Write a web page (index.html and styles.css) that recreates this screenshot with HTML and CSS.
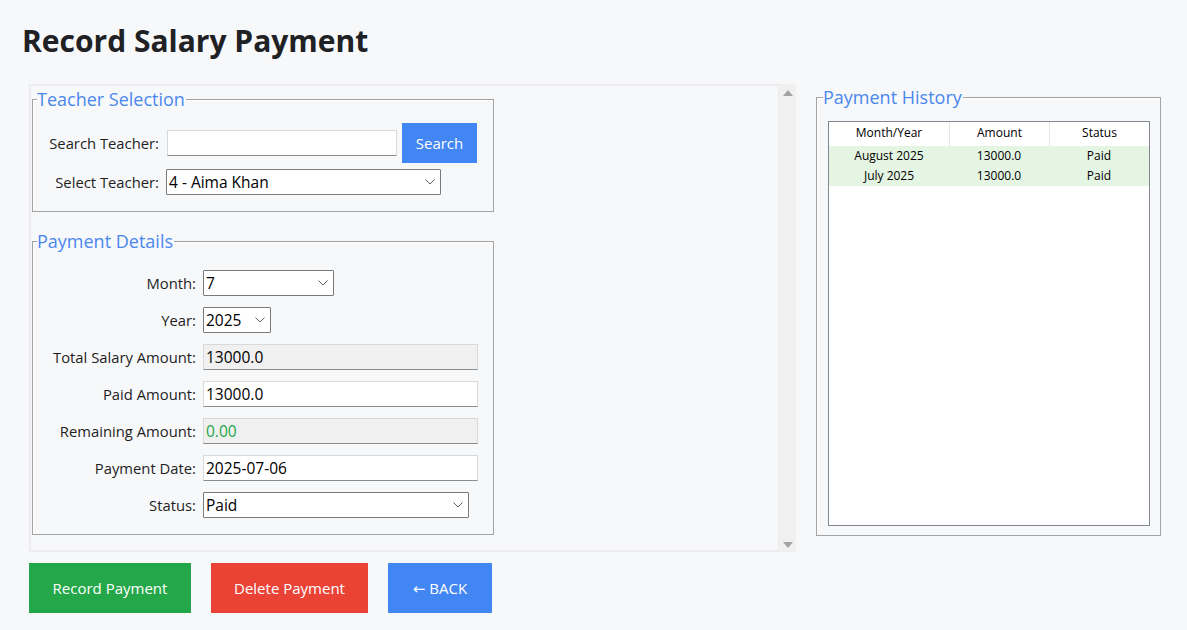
FILE: index.html
```html
<!DOCTYPE html>
<html>
<head>
<meta charset="utf-8">
<link rel="stylesheet" href="styles.css">
</head>
<body>
<h1 class="title">Record Salary Payment</h1>
<div class="main">
  <div class="scroller">
    <div class="canvas">
      <fieldset class="group teacher">
        <legend>Teacher Selection</legend>
        <div class="teacher-grid">
          <span class="lbl">Search Teacher:</span>
          <input class="entry search-entry" type="text" value="">
          <button class="btn-search">Search</button>
          <span class="lbl">Select Teacher:</span>
          <div class="combo combo-teacher"><span>4 - Aima Khan</span><svg class="chev" width="10" height="6" viewBox="0 0 10 6"><path d="M0.5 0.5 L5 5 L9.5 0.5" fill="none" stroke="#606060" stroke-width="1"/></svg></div>
        </div>
      </fieldset>
      <fieldset class="group payment">
        <legend>Payment Details</legend>
        <div class="pay-grid">
          <span class="lbl">Month:</span>
          <div class="combo combo-month"><span>7</span><svg class="chev" width="10" height="6" viewBox="0 0 10 6"><path d="M0.5 0.5 L5 5 L9.5 0.5" fill="none" stroke="#606060" stroke-width="1"/></svg></div>
          <span class="lbl">Year:</span>
          <div class="combo combo-year"><span>2025</span><svg class="chev" width="10" height="6" viewBox="0 0 10 6"><path d="M0.5 0.5 L5 5 L9.5 0.5" fill="none" stroke="#606060" stroke-width="1"/></svg></div>
          <span class="lbl">Total Salary Amount:</span>
          <input class="entry readonly" type="text" value="13000.0" readonly>
          <span class="lbl">Paid Amount:</span>
          <input class="entry" type="text" value="13000.0">
          <span class="lbl">Remaining Amount:</span>
          <input class="entry readonly green" type="text" value="0.00" readonly>
          <span class="lbl">Payment Date:</span>
          <input class="entry" type="text" value="2025-07-06">
          <span class="lbl">Status:</span>
          <div class="combo combo-status"><span>Paid</span><svg class="chev" width="10" height="6" viewBox="0 0 10 6"><path d="M0.5 0.5 L5 5 L9.5 0.5" fill="none" stroke="#606060" stroke-width="1"/></svg></div>
        </div>
      </fieldset>
    </div>
    <div class="scrollbar">
      <svg width="10" height="6" viewBox="0 0 10 6"><path d="M0 6 L5 0 L10 6 Z" fill="#a3a3a3"/></svg>
      <svg width="10" height="6" viewBox="0 0 10 6"><path d="M0 0 L5 6 L10 0 Z" fill="#a3a3a3"/></svg>
    </div>
  </div>
  <fieldset class="group history">
    <legend>Payment History</legend>
    <div class="tree">
      <div class="tree-row tree-head">
        <span>Month/Year</span><span>Amount</span><span>Status</span>
      </div>
      <div class="tree-row tree-item">
        <span>August 2025</span><span>13000.0</span><span>Paid</span>
      </div>
      <div class="tree-row tree-item">
        <span>July 2025</span><span>13000.0</span><span>Paid</span>
      </div>
    </div>
  </fieldset>
</div>
<div class="actions">
  <button class="btn btn-green">Record Payment</button>
  <button class="btn btn-red">Delete Payment</button>
  <button class="btn btn-blue">← BACK</button>
</div>
</body>
</html>
```

FILE: styles.css
```css
* { box-sizing: border-box; }
html, body { margin: 0; padding: 0; }
body {
  background: #f7f8fa;
  font-family: "Open Sans", "Noto Sans", "DejaVu Sans", sans-serif;
  font-size: 14px;
  color: #1e1e1e;
  width: 1187px;
  height: 630px;
  overflow: hidden;
}
.title {
  margin: 0;
  padding: 20px 0 0 22px;
  height: 84px;
  font-size: 30px;
  line-height: 42px;
  font-weight: 700;
  color: #202124;
}
.main {
  display: flex;
  align-items: flex-start;
  gap: 20px;
  padding-left: 29px;
}
.scroller {
  display: flex;
  height: 468px;
}
.canvas {
  width: 750px;
  height: 468px;
  border: 2px solid #ececee;
  border-right-width: 1px;
  padding: 3px 0 0 1px;
}
.scrollbar {
  width: 17px;
  height: 468px;
  background: #f0f0f0;
  display: flex;
  flex-direction: column;
  justify-content: space-between;
  align-items: center;
  padding: 6px 0 4px;
}
.scrollbar svg { display: block; }

fieldset.group {
  margin: 0;
  padding: 0;
  border: 1px solid #a3a3a3;
  min-width: 0;
  box-shadow: inset 1px 1px 0 #ffffff;
}
fieldset.group legend {
  margin-left: 4px;
  padding: 0 1px 0 0;
  font-size: 18px;
  line-height: 20px;
  height: 20px;
  color: #4a87ee;
}
.teacher {
  width: 462px;
  padding: 14px 0 16px 0 !important;
}
.teacher-grid {
  display: grid;
  grid-template-columns: 126px 230px 75px;
  grid-template-rows: 40px 26px;
  column-gap: 8px;
  row-gap: 6px;
  align-items: center;
}
.lbl {
  justify-self: end;
  white-space: nowrap;
  font-size: 14.8px;
  color: #1e1e1e;
}
.entry {
  height: 26px;
  width: 100%;
  font-family: inherit;
  font-size: 15.5px;
  color: #000;
  background: #ffffff;
  border: 1px solid #d9d9d9;
  border-bottom-color: #8c8c8c;
  padding: 0 2px;
  outline: none;
  margin: 0;
}
.search-entry { width: 230px; }
.entry.readonly { background: #f0f0f0; }
.entry.green { color: #22a747; }
.btn-search {
  width: 75px;
  height: 40px;
  background: #4286f4;
  color: #ffffff;
  border: none;
  font-family: inherit;
  font-size: 15px;
  margin-left: -3px;
  padding: 0;
}
.combo {
  height: 26px;
  background: #ffffff;
  border: 1px solid #7a7a7a;
  border-radius: 1px;
  display: flex;
  align-items: center;
  justify-content: space-between;
  padding: 0 5px 0 2px;
  font-size: 15.5px;
  color: #000;
}
.chev { display: block; flex: none; }
.combo-teacher { grid-column: 2 / 4; width: 275px; margin-left: -1px; }

.payment {
  width: 462px;
  margin-top: 19px !important;
  padding: 19px 0 16px 0 !important;
}
.pay-grid {
  display: grid;
  grid-template-columns: 163px 275px;
  grid-auto-rows: 26px;
  column-gap: 7px;
  row-gap: 11px;
  align-items: center;
}
.combo-month { width: 131px; }
.combo-year { width: 68px; }
.combo-status { width: 266px; }

.history {
  width: 345px;
  height: 449px;
  margin-top: 3px !important;
  padding: 14px 10px 10px 11px !important;
}
.history legend { margin-left: -5px !important; }
.tree {
  width: 322px;
  height: 405px;
  background: #ffffff;
  border: 1px solid #828790;
  font-size: 12px;
  color: #000;
}
.tree-row {
  display: grid;
  grid-template-columns: 120px 100px 1fr;
}
.tree-row span { text-align: center; }
.tree-head {
  height: 24px;
  line-height: 22px;
}
.tree-head span + span { border-left: 1px solid #e5e5e5; }
.tree-item {
  height: 20px;
  line-height: 20px;
  background: #e5f5e3;
}

.actions {
  display: flex;
  gap: 20px;
  padding: 11px 0 0 29px;
}
.btn {
  height: 50px;
  border: none;
  color: #ffffff;
  font-family: inherit;
  font-size: 15px;
  padding: 0;
}
.btn-green { width: 162px; background: #24a748; }
.btn-red { width: 157px; background: #ea4335; }
.btn-blue { width: 104px; background: #4286f4; }
```
